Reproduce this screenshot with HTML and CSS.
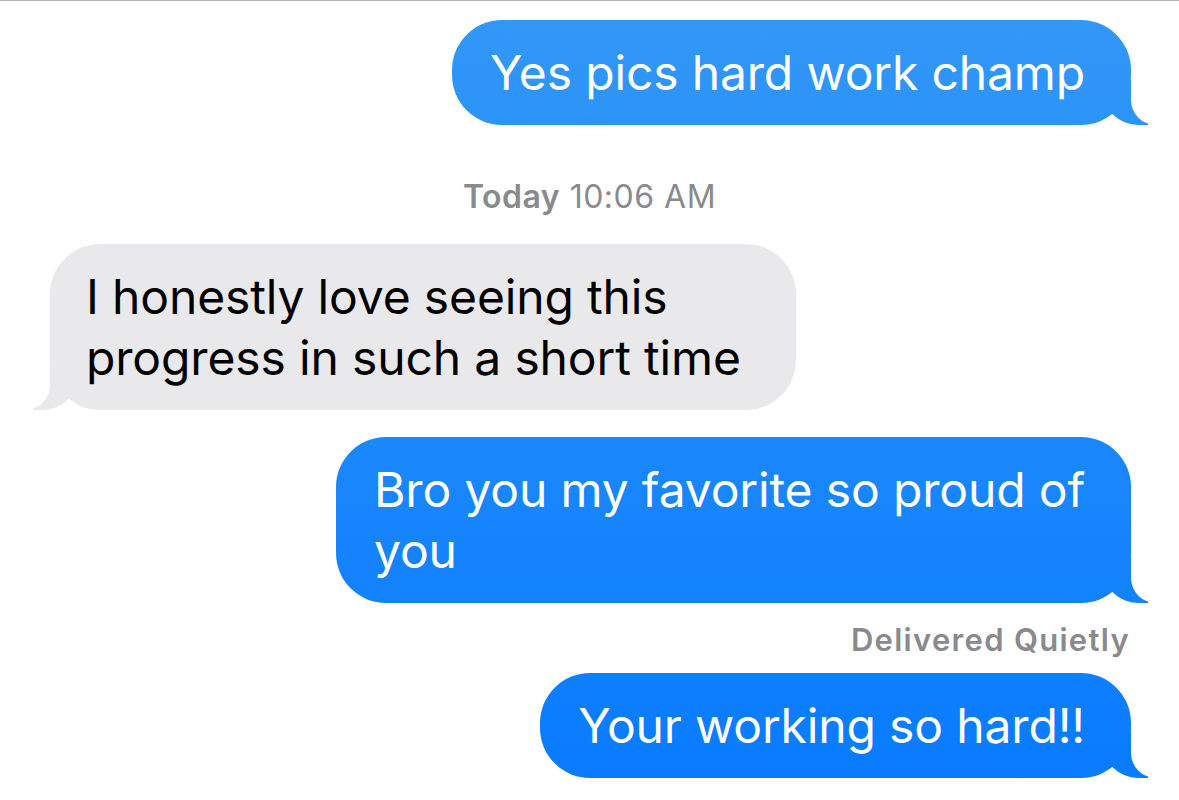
FILE: index.html
```html
<!DOCTYPE html>
<html>

<head>
    <link rel="stylesheet" href="styles.css">
</head>

<body>

    <div class="thread">
        <div class="bubble sent first">Yes pics hard work champ</div>

        <div class="stamp"><b>Today</b> 10:06 AM</div>

        <div class="bubble received">I honestly love seeing this<br>progress in such a short time</div>

        <div class="bubble sent">Bro you my favorite so proud of<br>you</div>

        <div class="status">Delivered Quietly</div>

        <div class="bubble sent">Your working so hard!!</div>
    </div>

</body>

</html>
```

FILE: styles.css
```css
body {
    margin: 0;
    background-color: #fff;
    font-family: Inter, "Noto Sans", sans-serif;
    border-top: 1px solid #b2b2b2;
}

.thread {
    display: flex;
    flex-direction: column;
    padding: 0 48px 0 50px;
}

.bubble {
    position: relative;
    z-index: 0;
    padding: 22px 46px 22px 38px;
    border-radius: 50px;
    font-size: 48px;
    line-height: 61px;
    letter-spacing: -0.15px;
    white-space: nowrap;
}

.bubble::before,
.bubble::after {
    content: "";
    position: absolute;
    z-index: -1;
    bottom: 0;
    height: 45px;
}

/* blue, outgoing */
.sent {
    align-self: flex-end;
    margin-top: 27px;
    color: #fff;
    background: linear-gradient(to bottom, #3398f7 0, #077aff 800px) fixed;
}

.sent.first {
    margin-top: 19px;
}

.sent::before {
    right: -17px;
    width: 45px;
    background: linear-gradient(to bottom, #3398f7 0, #077aff 800px) fixed;
    border-bottom-left-radius: 35px;
}

.sent::after {
    right: -25px;
    width: 25px;
    background-color: #fff;
    border-bottom-left-radius: 25px;
}

/* grey, incoming */
.received {
    align-self: flex-start;
    margin-top: 29px;
    padding: 22px 55px 22px 36px;
    color: #000;
    background-color: #e9e9eb;
}

.received::before {
    left: -17px;
    width: 45px;
    background-color: #e9e9eb;
    border-bottom-right-radius: 35px;
}

.received::after {
    left: -25px;
    width: 25px;
    background-color: #fff;
    border-bottom-right-radius: 25px;
}

.stamp {
    align-self: center;
    margin-top: 54px;
    margin-left: -2px;
    font-size: 32px;
    line-height: 36px;
    letter-spacing: 0.5px;
    color: #8a8a8e;
}

.stamp b {
    font-weight: 600;
}

.status {
    align-self: flex-end;
    margin-top: 19px;
    margin-right: 1px;
    margin-bottom: -12px;
    font-size: 31px;
    font-weight: 600;
    line-height: 36px;
    letter-spacing: 1.3px;
    color: #8a8a8e;
}
```
